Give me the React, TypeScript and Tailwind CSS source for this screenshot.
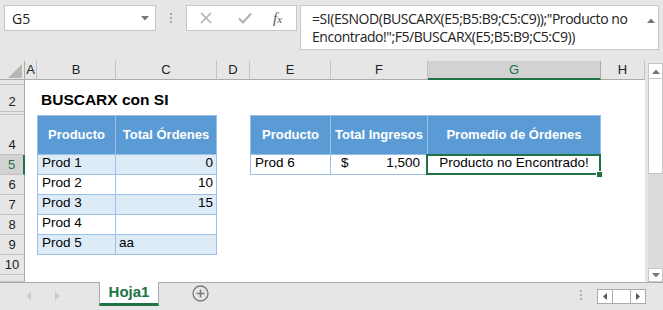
import React from "react";

const cols = [25, 12, 79, 101, 33, 81, 97, 173, 44];
const letters = ["", "A", "B", "C", "D", "E", "F", "G", "H"];
const rowH = [5, 27, 3, 40, 20, 20, 20, 20, 20, 20, 7];

const blueBorder = "border-[#9bc2e6]";

function ColHeader() {
  return (
    <>
      <div className="relative border-r border-b border-[#ababab] bg-[#e6e6e6]">
        <svg className="absolute left-[6px] top-[3px]" width="16" height="14" viewBox="0 0 16 14">
          <polygon points="16,0 16,14 2,14" fill="#b7b7b7" />
        </svg>
      </div>
      {letters.slice(1).map((l) => {
        const sel = l === "G";
        return (
          <div
            key={l}
            className={
              "flex items-center justify-center text-[13px] " +
              (sel
                ? "bg-[#d2d2d2] text-[#217346] border-b-2 border-b-[#217346] border-r border-r-[#ababab]"
                : "bg-[#e6e6e6] text-[#222] border-r border-b border-[#c2c2c2] border-b-[#ababab]")
            }
          >
            {l}
          </div>
        );
      })}
    </>
  );
}

type Cell = { text?: React.ReactNode; cls?: string };

function Row({ n, h, cells }: { n: number; h: number; cells: Cell[] }) {
  const sel = n === 5;
  const show = h >= 20;
  return (
    <>
      <div
        className={
          "flex items-end justify-center overflow-hidden text-[13px] leading-[18px] " +
          (sel
            ? "bg-[#d2d2d2] text-[#217346] border-r-2 border-r-[#217346] border-b border-b-[#c2c2c2]"
            : "bg-[#e6e6e6] text-[#222] border-r border-r-[#ababab] border-b border-b-[#c2c2c2]")
        }
        style={{ height: h }}
      >
        {show ? n : ""}
      </div>
      {cells.map((c, i) => (
        <div key={i} className={"relative " + (c.cls ?? "bg-white")}>
          {c.text}
        </div>
      ))}
    </>
  );
}

const empty = (k: number): Cell[] => Array.from({ length: k }, () => ({}));

export default function App() {
  const hdr =
    "bg-[#5b9bd5] text-white font-bold flex items-center justify-center text-[13px] border-r border-b " + blueBorder;
  const tdBase = "flex items-end pb-[1px] text-[13.5px] text-black border-r border-b " + blueBorder;
  const tdW = tdBase + " bg-white";
  const tdB = tdBase + " bg-[#ddebf7]";

  const r4: Cell[] = [
    {},
    { text: "Producto", cls: hdr + " border-l border-t" },
    { text: "Total Órdenes", cls: hdr + " border-t" },
    {},
    { text: "Producto", cls: hdr + " border-l border-t" },
    { text: "Total Ingresos", cls: hdr + " border-t" },
    { text: "Promedio de Órdenes", cls: hdr + " border-t" },
    {},
  ];

  const t1 = (name: string, val: string, banded: boolean, right = true): Cell[] => [
    {},
    { text: <span className="pl-[4px]">{name}</span>, cls: (banded ? tdB : tdW) + " border-l" },
    {
      text: <span className={right ? "w-full text-right pr-[3px]" : "pl-[3px]"}>{val}</span>,
      cls: banded ? tdB : tdW,
    },
  ];

  const r5: Cell[] = [
    ...t1("Prod 1", "0", true),
    {},
    { text: <span className="pl-[4px]">Prod 6</span>, cls: tdW + " border-l" },
    {
      text: (
        <div className="w-full flex justify-between pl-[10px] pr-[7px]">
          <span>$</span>
          <span>1,500</span>
        </div>
      ),
      cls: tdW,
    },
    {
      text: (
        <>
          <span className="w-full text-center">Producto no Encontrado!</span>
          <div className="absolute left-[-2px] top-[-1px] right-[-1px] bottom-[-1px] border-2 border-[#217346]" />
          <div className="absolute right-[-2px] bottom-[-3px] w-[6px] h-[6px] bg-[#217346] border-l border-t border-white" />
        </>
      ),
      cls: tdW + " z-10",
    },
    {},
  ];

  const rows: Cell[][] = [
    empty(8),
    [
      {},
      {
        text: (
          <span className="absolute z-10 left-[4px] bottom-[1px] whitespace-nowrap font-bold text-[15.5px] text-black">
            BUSCARX con SI
          </span>
        ),
        cls: "bg-white z-10",
      },
      ...empty(6),
    ],
    empty(8),
    r4,
    r5,
    [...t1("Prod 2", "10", false), ...empty(5)],
    [...t1("Prod 3", "15", true), ...empty(5)],
    [...t1("Prod 4", "", false), ...empty(5)],
    [...t1("Prod 5", "aa", true, false), ...empty(5)],
    empty(8),
    empty(8),
  ];

  return (
    <div className="w-[663px] h-[310px] bg-[#e6e6e6] overflow-hidden font-['Liberation_Sans',sans-serif] select-none">
      {/* Formula bar */}
      <div className="h-[61px] flex items-start pt-[5px] pl-[4px]">
        <div className="w-[152px] h-[26px] bg-white border border-[#c6c6c6] flex items-center justify-between pl-[7px] pr-[6px] text-[14px] text-[#222] font-['Open_Sans',sans-serif]">
          <span>G5</span>
          <svg width="8" height="5" viewBox="0 0 8 5">
            <polygon points="0,0 8,0 4,4.5" fill="#777" />
          </svg>
        </div>
        <div className="w-[30px] h-[26px] flex flex-col items-center justify-center gap-[2px]">
          <div className="w-[2px] h-[2px] bg-[#a8a8a8]" />
          <div className="w-[2px] h-[2px] bg-[#a8a8a8]" />
          <div className="w-[2px] h-[2px] bg-[#a8a8a8]" />
        </div>
        <div className="w-[111px] h-[26px] bg-white border border-[#c6c6c6] flex items-center pl-[13px]">
          <svg width="12" height="12" viewBox="0 0 12 12">
            <path d="M1 1 L11 11 M11 1 L1 11" stroke="#b0b0b0" strokeWidth="1.6" />
          </svg>
          <svg className="ml-[26px]" width="14" height="12" viewBox="0 0 14 12">
            <path d="M1 6.5 L5 10.5 L13 1.5" stroke="#b0b0b0" strokeWidth="2" fill="none" />
          </svg>
          <span className="ml-[21px] font-['Liberation_Serif',serif] italic text-[15px] text-[#555] leading-none">
            f<span className="text-[11px]">x</span>
          </span>
        </div>
        <div className="ml-[3px] w-[359px] h-[45px] bg-white border border-[#c6c6c6] relative pl-[11px] pt-[4px] text-[14px] leading-[18px] text-[#222] font-['Open_Sans',sans-serif] tracking-[-0.45px]">
          <div>=SI(ESNOD(BUSCARX(E5;B5:B9;C5:C9));"Producto no</div>
          <div>Encontrado!";F5/BUSCARX(E5;B5:B9;C5:C9))</div>
          <svg className="absolute right-[3px] top-[12px]" width="8" height="5" viewBox="0 0 8 5">
            <polygon points="0,5 8,5 4,0.5" fill="#777" />
          </svg>
        </div>
      </div>

      {/* Grid + scrollbar */}
      <div className="flex h-[221px]">
        <div
          className="grid w-[645px] border-r border-[#ababab]"
          style={{
            gridTemplateColumns: cols.map((c) => c + "px").join(" "),
            gridTemplateRows: "19px " + rowH.map((h) => h + "px").join(" "),
          }}
        >
          <ColHeader />
          {rows.map((cells, i) => (
            <Row key={i} n={i + 1} h={rowH[i]} cells={cells} />
          ))}
        </div>
        <div className="w-[18px] pl-[3px] pt-[2px] flex flex-col">
          <div className="h-[16px] bg-white border border-[#c6c6c6] flex items-center justify-center">
            <svg width="8" height="5" viewBox="0 0 8 5">
              <polygon points="0,5 8,5 4,0.5" fill="#777" />
            </svg>
          </div>
          <div className="h-[95px] bg-white border-x border-b border-[#c6c6c6]" />
          <div className="flex-1 bg-[#dcdcdc]" />
          <div className="h-[14px] bg-white border border-[#c6c6c6] flex items-center justify-center">
            <svg width="8" height="5" viewBox="0 0 8 5">
              <polygon points="0,0 8,0 4,4.5" fill="#777" />
            </svg>
          </div>
        </div>
      </div>

      {/* Sheet tab bar */}
      <div className="h-[28px] border-t border-[#ababab] flex items-start relative">
        <div className="w-[99px] h-[26px] flex items-center pl-[26px] gap-[24px]">
          <svg width="5" height="8" viewBox="0 0 5 8">
            <polygon points="5,0 5,8 0,4" fill="#c8c8c8" />
          </svg>
          <svg width="5" height="8" viewBox="0 0 5 8">
            <polygon points="0,0 0,8 5,4" fill="#c8c8c8" />
          </svg>
        </div>
        <div className="w-[60px] h-[24px] -mt-px bg-white border-x border-[#ababab] border-b-[3px] border-b-[#217346] flex items-center justify-center font-bold text-[15px] text-[#217346]">
          Hoja1
        </div>
        <div className="ml-[33px] mt-[2px]">
          <svg width="17" height="17" viewBox="0 0 17 17">
            <circle cx="8.5" cy="8.5" r="7.5" fill="none" stroke="#7a7a7a" strokeWidth="1.3" />
            <path d="M8.5 4.5 V12.5 M4.5 8.5 H12.5" stroke="#7a7a7a" strokeWidth="1.5" />
          </svg>
        </div>
        <div className="absolute left-[580px] top-[7px] flex flex-col gap-[2px]">
          <div className="w-[2px] h-[2px] bg-[#b0b0b0]" />
          <div className="w-[2px] h-[2px] bg-[#b0b0b0]" />
          <div className="w-[2px] h-[2px] bg-[#b0b0b0]" />
        </div>
        <div className="absolute left-[597px] top-[6px] flex h-[15px]">
          <div className="w-[16px] bg-white border border-[#ababab] flex items-center justify-center">
            <svg width="4" height="7" viewBox="0 0 4 7">
              <polygon points="4,0 4,7 0,3.5" fill="#555" />
            </svg>
          </div>
          <div className="w-[17px] bg-white border-y border-[#ababab]" />
          <div className="w-[16px] bg-white border border-[#ababab] flex items-center justify-center">
            <svg width="4" height="7" viewBox="0 0 4 7">
              <polygon points="0,0 0,7 4,3.5" fill="#555" />
            </svg>
          </div>
        </div>
      </div>
    </div>
  );
}
